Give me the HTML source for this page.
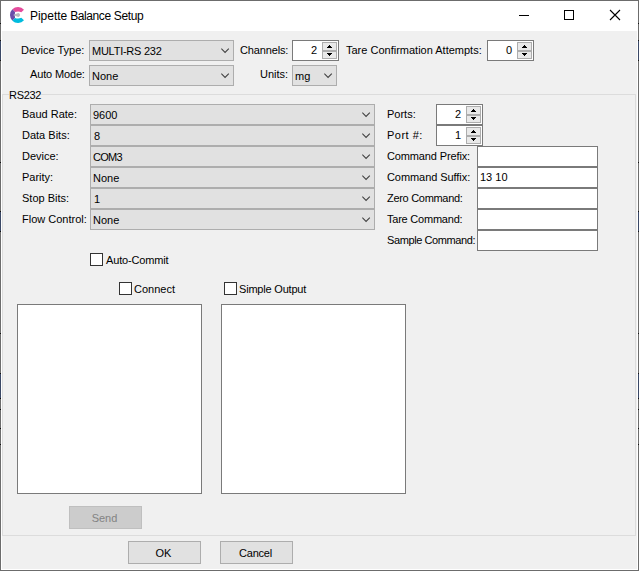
<!DOCTYPE html>
<html><head><meta charset="utf-8"><title>Pipette Balance Setup</title>
<style>
html,body{margin:0;padding:0;}
body{width:639px;height:571px;overflow:hidden;background:#f0f0f0;font-family:"Liberation Sans",sans-serif;font-size:11px;color:#000;position:relative;}
body>*{position:absolute;box-sizing:border-box;}
i{position:absolute;box-sizing:border-box;display:block;}
.t{white-space:nowrap;line-height:13px;height:13px;}
#title{left:0;top:0;width:639px;height:31px;background:#fff;}
#frame{left:0;top:0;width:639px;height:571px;border:1px solid #6c6c6c;box-shadow:inset 0 0 0 1px #fff;pointer-events:none;}
.combo{background:#e1e1e1;border:1px solid #adadad;height:21px;}
.chev{position:absolute;right:3px;top:7px;}
.spin{background:#fff;border:1px solid #7a7a7a;height:21px;width:47px;}
.spin .u,.spin .d{left:29px;width:15px;background:#e9e9e9;border:1px solid #adadad;}
.spin .u{top:1px;height:9px;}
.spin .d{top:10px;height:8px;}
.ua,.da{position:absolute;left:34px;}
.ua{top:4px;}
.da{top:12px;}
.tf{background:#fff;border:1px solid #7a7a7a;height:21px;width:121px;}
.cb{width:13px;height:13px;background:#fff;border:1px solid #333;}
.ta{background:#fff;border:1px solid #7a7a7a;width:185px;height:190px;}
.btn{background:#e1e1e1;border:1px solid #adadad;height:23px;width:73px;}
.btn.dis{background:#cccccc;border-color:#bfbfbf;}
#grp{left:2px;top:94px;width:634px;height:442px;border:1px solid #dcdcdc;}
#grpl{left:9px;top:94px;width:32px;height:1px;background:#f0f0f0;}
</style></head><body>
<div id="title"></div>
<svg id="icon" style="position:absolute;left:0;top:0" width="40" height="31" viewBox="0 0 40 31">
<path d="M12.34 9.34 A8 8 0 0 1 24.0 9.7 L21.3 12.2 A8 8 0 0 0 15.1 12.1 Z" fill="#e54b9b"/>
<path d="M12.34 9.34 A8 8 0 0 0 12.34 20.66 L15.1 17.9 A12 12 0 0 1 15.1 12.1 Z" fill="#6a4caa"/>
<path d="M12.34 20.66 A8 8 0 0 0 24.0 20.3 L21.3 17.8 A8 8 0 0 1 15.1 17.9 Z" fill="#00bcde"/>
<path d="M12.9 15 L17 13.5 A1.9 1.9 0 1 1 17 16.5 Z" fill="#b7b6be"/>
</svg>
<div class="t" id="ttext" style="left:30px;top:9px;font-size:12px;letter-spacing:-0.24px;line-height:14px;height:14px"><span style="letter-spacing:-0.03px">Pipette</span> <span style="letter-spacing:-0.42px">Balance</span> <span style="letter-spacing:-0.39px">Setup</span></div>
<svg style="position:absolute;left:510px;top:5px" width="120" height="20" viewBox="0 0 120 20">
<path d="M9 10.5 H19" stroke="#000" stroke-width="1" fill="none"/>
<rect x="54.5" y="5.5" width="9" height="9" stroke="#000" stroke-width="1" fill="none"/>
<path d="M100 5 L110 15 M110 5 L100 15" stroke="#000" stroke-width="1.1" fill="none"/>
</svg>
<div class="t" style="left:21px;top:44px;">Device Type:</div>
<div class="combo" style="left:89px;top:40px;width:145px"><svg class="chev" width="9" height="6" viewBox="0 0 9 6"><path d="M0.3 0.6 L4.05 4.35 L7.8 0.6" stroke="#404040" stroke-width="1.1" fill="none"/></svg></div>
<div class="t" style="left:92px;top:45px;letter-spacing:-0.25px;">MULTI-RS 232</div>
<div class="t" style="left:240px;top:44px;letter-spacing:-0.15px;">Channels:</div>
<div class="spin" style="left:292px;top:40px"><i class="u"></i><i class="d"></i><svg class="ua" width="5" height="3" viewBox="0 0 5 3" shape-rendering="crispEdges"><path d="M2 0h1v1h1v1h1v1h-5v-1h1v-1h1z" fill="#000"/></svg><svg class="da" width="5" height="3" viewBox="0 0 5 3" shape-rendering="crispEdges"><path d="M0 0h5v1h-1v1h-1v1h-1v-1h-1v-1h-1z" fill="#000"/></svg></div>
<div class="t" style="right:322px;top:44px;">2</div>
<div class="t" style="left:346px;top:44px;">Tare Confirmation Attempts:</div>
<div class="spin" style="left:487px;top:40px"><i class="u"></i><i class="d"></i><svg class="ua" width="5" height="3" viewBox="0 0 5 3" shape-rendering="crispEdges"><path d="M2 0h1v1h1v1h1v1h-5v-1h1v-1h1z" fill="#000"/></svg><svg class="da" width="5" height="3" viewBox="0 0 5 3" shape-rendering="crispEdges"><path d="M0 0h5v1h-1v1h-1v1h-1v-1h-1v-1h-1z" fill="#000"/></svg></div>
<div class="t" style="right:127px;top:44px;">0</div>
<div class="t" style="left:30px;top:68px;letter-spacing:-0.15px;">Auto Mode:</div>
<div class="combo" style="left:89px;top:65px;width:145px"><svg class="chev" width="9" height="6" viewBox="0 0 9 6"><path d="M0.3 0.6 L4.05 4.35 L7.8 0.6" stroke="#404040" stroke-width="1.1" fill="none"/></svg></div>
<div class="t" style="left:92px;top:70px;">None</div>
<div class="t" style="left:260px;top:68px;">Units:</div>
<div class="combo" style="left:292px;top:65px;width:45px"><svg class="chev" width="9" height="6" viewBox="0 0 9 6"><path d="M0.3 0.6 L4.05 4.35 L7.8 0.6" stroke="#404040" stroke-width="1.1" fill="none"/></svg></div>
<div class="t" style="left:295px;top:70px;">mg</div>
<div id="grp"></div>
<div id="grpl"></div>
<div class="t" style="left:9px;top:89px;letter-spacing:-0.3px;">RS232</div>
<div class="t" style="left:22px;top:108px;">Baud Rate:</div>
<div class="combo" style="left:90px;top:104px;width:285px"><svg class="chev" width="9" height="6" viewBox="0 0 9 6"><path d="M0.3 0.6 L4.05 4.35 L7.8 0.6" stroke="#404040" stroke-width="1.1" fill="none"/></svg></div>
<div class="t" style="left:93px;top:109px;">9600</div>
<div class="t" style="left:22px;top:129px;">Data Bits:</div>
<div class="combo" style="left:90px;top:125px;width:285px"><svg class="chev" width="9" height="6" viewBox="0 0 9 6"><path d="M0.3 0.6 L4.05 4.35 L7.8 0.6" stroke="#404040" stroke-width="1.1" fill="none"/></svg></div>
<div class="t" style="left:94px;top:130px;">8</div>
<div class="t" style="left:22px;top:150px;">Device:</div>
<div class="combo" style="left:90px;top:146px;width:285px"><svg class="chev" width="9" height="6" viewBox="0 0 9 6"><path d="M0.3 0.6 L4.05 4.35 L7.8 0.6" stroke="#404040" stroke-width="1.1" fill="none"/></svg></div>
<div class="t" style="left:93px;top:151px;letter-spacing:-0.7px;">COM3</div>
<div class="t" style="left:22px;top:171px;">Parity:</div>
<div class="combo" style="left:90px;top:167px;width:285px"><svg class="chev" width="9" height="6" viewBox="0 0 9 6"><path d="M0.3 0.6 L4.05 4.35 L7.8 0.6" stroke="#404040" stroke-width="1.1" fill="none"/></svg></div>
<div class="t" style="left:93px;top:172px;">None</div>
<div class="t" style="left:22px;top:192px;">Stop Bits:</div>
<div class="combo" style="left:90px;top:188px;width:285px"><svg class="chev" width="9" height="6" viewBox="0 0 9 6"><path d="M0.3 0.6 L4.05 4.35 L7.8 0.6" stroke="#404040" stroke-width="1.1" fill="none"/></svg></div>
<div class="t" style="left:94px;top:193px;">1</div>
<div class="t" style="left:22px;top:213px;">Flow Control:</div>
<div class="combo" style="left:90px;top:209px;width:285px"><svg class="chev" width="9" height="6" viewBox="0 0 9 6"><path d="M0.3 0.6 L4.05 4.35 L7.8 0.6" stroke="#404040" stroke-width="1.1" fill="none"/></svg></div>
<div class="t" style="left:93px;top:214px;">None</div>
<div class="t" style="left:387px;top:108px;">Ports:</div>
<div class="spin" style="left:436px;top:104px"><i class="u"></i><i class="d"></i><svg class="ua" width="5" height="3" viewBox="0 0 5 3" shape-rendering="crispEdges"><path d="M2 0h1v1h1v1h1v1h-5v-1h1v-1h1z" fill="#000"/></svg><svg class="da" width="5" height="3" viewBox="0 0 5 3" shape-rendering="crispEdges"><path d="M0 0h5v1h-1v1h-1v1h-1v-1h-1v-1h-1z" fill="#000"/></svg></div>
<div class="t" style="right:178px;top:108px;">2</div>
<div class="t" style="left:387px;top:129px;letter-spacing:0.5px;">Port #:</div>
<div class="spin" style="left:436px;top:125px"><i class="u"></i><i class="d"></i><svg class="ua" width="5" height="3" viewBox="0 0 5 3" shape-rendering="crispEdges"><path d="M2 0h1v1h1v1h1v1h-5v-1h1v-1h1z" fill="#000"/></svg><svg class="da" width="5" height="3" viewBox="0 0 5 3" shape-rendering="crispEdges"><path d="M0 0h5v1h-1v1h-1v1h-1v-1h-1v-1h-1z" fill="#000"/></svg></div>
<div class="t" style="right:178px;top:129px;">1</div>
<div class="tf" style="left:477px;top:146px"></div>
<div class="t" style="left:387px;top:150px;letter-spacing:-0.13px;">Command Prefix:</div>
<div class="tf" style="left:477px;top:167px"></div>
<div class="t" style="left:480px;top:171px;">13 10</div>
<div class="t" style="left:387px;top:171px;letter-spacing:-0.07px;">Command Suffix:</div>
<div class="tf" style="left:477px;top:188px"></div>
<div class="t" style="left:387px;top:192px;letter-spacing:-0.3px;">Zero Command:</div>
<div class="tf" style="left:477px;top:209px"></div>
<div class="t" style="left:387px;top:213px;letter-spacing:-0.22px;">Tare Command:</div>
<div class="tf" style="left:477px;top:230px"></div>
<div class="t" style="left:387px;top:234px;letter-spacing:-0.4px;">Sample Command:</div>
<div class="cb" style="left:90px;top:253px"></div>
<div class="t" style="left:106px;top:254px;letter-spacing:-0.15px;">Auto-Commit</div>
<div class="cb" style="left:119px;top:282px"></div>
<div class="t" style="left:134px;top:283px;">Connect</div>
<div class="cb" style="left:224px;top:282px"></div>
<div class="t" style="left:239px;top:283px;letter-spacing:-0.2px;">Simple Output</div>
<div class="ta" style="left:17px;top:304px"></div>
<div class="ta" style="left:221px;top:304px"></div>
<div class="btn dis" style="left:69px;top:506px"></div>
<div class="t" style="left:69px;width:73px;text-align:center;top:512px;color:#838383;margin-left:-1px;">Send</div>
<div class="btn" style="left:128px;top:541px"></div>
<div class="t" style="left:128px;width:73px;text-align:center;top:547px;margin-left:-1px;">OK</div>
<div class="btn" style="left:220px;top:541px"></div>
<div class="t" style="left:220px;width:73px;text-align:center;top:547px;letter-spacing:-0.2px;margin-left:-1px;">Cancel</div>
<div id="frame"></div>
<div style="left:0px;top:41px;width:1px;height:19px;background:#3a4866"></div>
<div style="left:0px;top:212px;width:1px;height:19px;background:#3a4866"></div>
<div style="left:0px;top:374px;width:1px;height:24px;background:#3a4866"></div>
<div style="left:0px;top:23px;width:1px;height:1px;background:#111"></div>
<div style="left:0px;top:40px;width:1px;height:1px;background:#111"></div>
<div style="left:0px;top:60px;width:1px;height:1px;background:#111"></div>
<div style="left:0px;top:162px;width:1px;height:1px;background:#111"></div>
<div style="left:0px;top:211px;width:1px;height:1px;background:#111"></div>
<div style="left:0px;top:231px;width:1px;height:1px;background:#111"></div>
<div style="left:0px;top:333px;width:1px;height:1px;background:#111"></div>
<div style="left:0px;top:373px;width:1px;height:1px;background:#111"></div>
<div style="left:0px;top:398px;width:1px;height:1px;background:#111"></div>
<div style="left:0px;top:409px;width:1px;height:1px;background:#111"></div>
<div style="left:0px;top:428px;width:1px;height:1px;background:#111"></div>
<div style="left:0px;top:444px;width:1px;height:1px;background:#111"></div>
<div style="left:638px;top:41px;width:1px;height:19px;background:#3a4866"></div>
<div style="left:638px;top:212px;width:1px;height:19px;background:#3a4866"></div>
<div style="left:638px;top:374px;width:1px;height:24px;background:#3a4866"></div>
<div style="left:638px;top:23px;width:1px;height:1px;background:#111"></div>
<div style="left:638px;top:40px;width:1px;height:1px;background:#111"></div>
<div style="left:638px;top:60px;width:1px;height:1px;background:#111"></div>
<div style="left:638px;top:162px;width:1px;height:1px;background:#111"></div>
<div style="left:638px;top:211px;width:1px;height:1px;background:#111"></div>
<div style="left:638px;top:231px;width:1px;height:1px;background:#111"></div>
<div style="left:638px;top:333px;width:1px;height:1px;background:#111"></div>
<div style="left:638px;top:373px;width:1px;height:1px;background:#111"></div>
<div style="left:638px;top:398px;width:1px;height:1px;background:#111"></div>
<div style="left:638px;top:409px;width:1px;height:1px;background:#111"></div>
<div style="left:638px;top:428px;width:1px;height:1px;background:#111"></div>
<div style="left:638px;top:444px;width:1px;height:1px;background:#111"></div>
</body></html>
